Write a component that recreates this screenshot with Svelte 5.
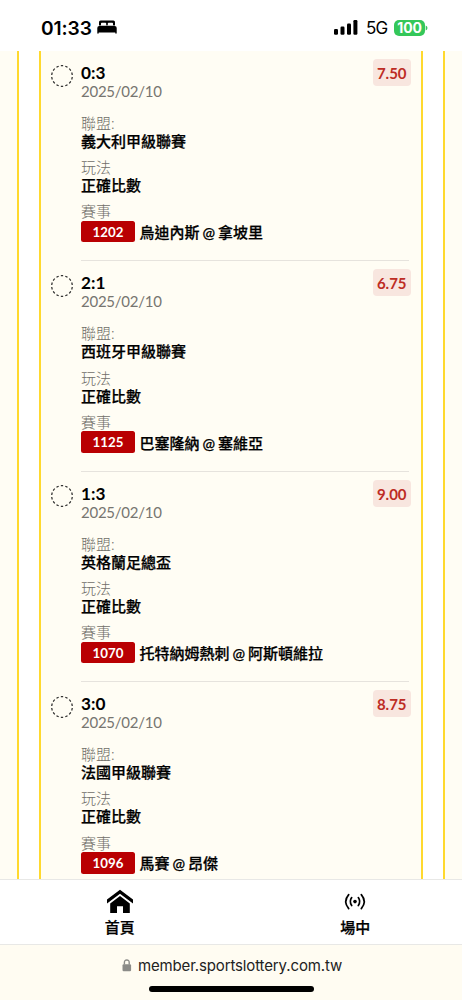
<script>
  const bets = [
    { score: '0:3', league: '義大利甲級聯賽', code: '1202', away: '烏迪內斯', home: '拿坡里', odds: '7.50' },
    { score: '2:1', league: '西班牙甲級聯賽', code: '1125', away: '巴塞隆納', home: '塞維亞', odds: '6.75' },
    { score: '1:3', league: '英格蘭足總盃', code: '1070', away: '托特納姆熱刺', home: '阿斯頓維拉', odds: '9.00' },
    { score: '3:0', league: '法國甲級聯賽', code: '1096', away: '馬賽', home: '昂傑', odds: '8.75' }
  ];
</script>

<div class="screen">
  <header class="status">
    <div class="clock">
      <span>01:33</span>
      <svg width="20" height="15" viewBox="0 0 20 15">
        <path d="M2 5.6V2.2Q2 .6 3.6 .6H16.4Q18 .6 18 2.2V5.6Z" />
        <path d="M4 5.4V3.6Q4 2.8 4.8 2.8H8.4Q9.2 2.8 9.2 3.6V5.4ZM10.8 5.4V3.6Q10.8 2.8 11.6 2.8H15.2Q16 2.8 16 3.6V5.4Z" fill="#fff" />
        <path d="M2.3 5.9H17.7Q19.7 5.9 19.7 8.1V13.1Q19.7 13.8 19 13.8T18.3 13.1V12.4H1.7V13.1Q1.7 13.8 1 13.8T.3 13.1V8.1Q.3 5.9 2.3 5.9Z" />
      </svg>
    </div>
    <div class="signals">
      <svg width="24" height="15" viewBox="0 0 24 15">
        <rect x="0" y="9" width="4" height="5.8" rx="1.2" />
        <rect x="6.5" y="6.6" width="4" height="8.2" rx="1.2" />
        <rect x="13" y="3.6" width="4" height="11.2" rx="1.2" />
        <rect x="19.4" y="0" width="4" height="14.8" rx="1.2" />
      </svg>
      <span class="network">5G</span>
      <span class="battery">100</span>
      <svg class="cap" width="3" height="6" viewBox="0 0 3 6"><path d="M.7.5Q2.5 1.4 2.5 3T.7 5.5Z" /></svg>
    </div>
  </header>

  <main>
    <div class="edge left"></div>
    <ul class="slip">
      {#each bets as bet}
        <li>
          <svg class="radio" width="24" height="24" viewBox="0 0 24 24">
            <circle cx="12" cy="12" r="10.3" pathLength="112" transform="rotate(-90 12 12)" />
          </svg>
          <div class="body">
            <div class="top">
              <div>
                <div class="score">{bet.score}</div>
                <div class="date">2025/02/10</div>
              </div>
              <span class="odds">{bet.odds}</span>
            </div>
            <dl>
              <dt>聯盟:</dt>
              <dd>{bet.league}</dd>
              <dt>玩法</dt>
              <dd>正確比數</dd>
              <dt>賽事</dt>
              <dd class="match"><span class="code">{bet.code}</span><span class="teams">{bet.away} @ {bet.home}</span></dd>
            </dl>
          </div>
        </li>
      {/each}
    </ul>
    <div class="edge right"></div>
  </main>

  <nav>
    <a href="#home">
      <svg width="28" height="26" viewBox="0 0 28 26">
        <path d="M14 .8L27 10.6V14.6L14 4.7L1 14.6V10.6Z" />
        <path d="M14 7L23.8 14.4V24H17V17.3H11V24H4.2V14.4Z" />
      </svg>
      <span>首頁</span>
    </a>
    <a href="#live">
      <svg class="live" width="28" height="26" viewBox="0 0 28 26">
        <circle cx="14" cy="12.6" r="1.8" />
        <path d="M10.7 8.6Q7.9 12.6 10.7 16.6M17.3 8.6Q20.1 12.6 17.3 16.6M7.7 5.6Q1.8 12.6 7.7 19.6M20.3 5.6Q26.2 12.6 20.3 19.6" />
      </svg>
      <span>場中</span>
    </a>
  </nav>

  <footer>
    <div class="address">
      <svg width="10" height="13" viewBox="0 0 10 13">
        <rect x=".5" y="5.3" width="8.6" height="7" rx="1.2" />
        <path d="M2.4 5.5V3.5Q2.4 1 4.8 1T7.2 3.5V5.5" />
      </svg>
      <span>member.sportslottery.com.tw</span>
    </div>
    <div class="indicator"></div>
  </footer>
</div>

<style>
  :global(body) {
    margin: 0;
    background: #fff;
  }
  .screen {
    width: 462px;
    height: 1000px;
    display: flex;
    flex-direction: column;
    overflow: hidden;
    color: #000;
    font-family: Lato, "Noto Sans CJK TC", sans-serif;
  }
  .status {
    flex: none;
    height: 51px;
    box-sizing: border-box;
    padding: 17px 34px 0 41px;
    display: flex;
    justify-content: space-between;
    font-family: Inter, sans-serif;
  }
  .clock, .signals {
    display: flex;
    align-items: center;
    height: 21px;
  }
  .clock {
    gap: 5.5px;
    font-size: 19.2px;
    font-weight: 600;
    letter-spacing: -0.1px;
  }
  .network {
    margin-left: 8px;
    font-size: 17px;
    letter-spacing: -0.8px;
    width: 22px;
  }
  .battery {
    margin-left: 6px;
    width: 31px;
    height: 16px;
    border-radius: 5px;
    background: #34c759;
    color: #fff;
    font-size: 14px;
    font-weight: 700;
    line-height: 16px;
    letter-spacing: -0.2px;
    text-align: center;
  }
  .cap {
    fill: #34c759;
  }
  main {
    flex: none;
    height: 828px;
    display: flex;
    justify-content: space-between;
    overflow: hidden;
  }
  .edge {
    box-sizing: border-box;
    width: 19.3px;
    background: #fffdf4;
  }
  .left {
    border-right: 2px solid #ffd92e;
  }
  .right {
    border-left: 2px solid #ffd92e;
  }
  .slip {
    box-sizing: border-box;
    width: 384px;
    height: 842px;
    margin: 0;
    padding: 0 12px 0 10px;
    list-style: none;
    background: #fffdf4;
    border: solid #ffd92e;
    border-width: 0 2px;
  }
  li {
    display: flex;
    height: 210.4px;
  }
  .radio {
    flex: none;
    margin: 12.7px 7.5px 0 -1.5px;
  }
  .radio circle {
    fill: none;
    stroke: #222;
    stroke-width: 1.2;
    stroke-dasharray: 4.2 3.8;
    stroke-dashoffset: 2.1;
  }
  .body {
    flex: 1;
    box-sizing: border-box;
    height: 210.4px;
    border-bottom: 1.4px solid #e6e3dd;
  }
  .top {
    display: flex;
    justify-content: space-between;
    height: 63px;
    padding-top: 8px;
    box-sizing: border-box;
    margin-right: -2px;
  }
  .score {
    margin-top: 4px;
    font-size: 17.2px;
    font-weight: 700;
    line-height: 19px;
  }
  .date {
    color: #777570;
    font-size: 15px;
    line-height: 18px;
    letter-spacing: -0.25px;
  }
  .odds {
    width: 38.5px;
    height: 27px;
    border-radius: 4px;
    background: #f8e6df;
    color: #bd2c24;
    font-size: 15px;
    font-weight: 700;
    line-height: 29px;
    text-align: center;
  }
  dl, dd {
    margin: 0;
  }
  dt, dd {
    font-size: 15px;
    line-height: 18px;
  }
  dt {
    color: #6f6d68;
    font-weight: 300;
  }
  dd {
    font-weight: 500;
    -webkit-text-stroke: 0.25px #000;
    margin-bottom: 8.2px;
  }
  .match {
    display: flex;
    align-items: center;
    gap: 4.5px;
    height: 21.5px;
    margin-top: 0.6px;
    white-space: nowrap;
  }
  .teams {
    padding-top: 1px;
    word-spacing: -0.8px;
  }
  .code {
    width: 54px;
    height: 21.5px;
    border-radius: 2.5px;
    background: #b90002;
    color: #fff;
    font-size: 13.3px;
    font-weight: 700;
    -webkit-text-stroke: 0;
    line-height: 22px;
    text-align: center;
  }
  nav {
    flex: none;
    height: 66px;
    box-sizing: border-box;
    border: solid #e8e8e6;
    border-width: 1px 0;
    padding: 0 2px 0 2px;
    display: flex;
    background: #fff;
  }
  nav a {
    width: 235.5px;
    flex: none;
    display: flex;
    flex-direction: column;
    align-items: center;
    padding-top: 9px;
    color: #000;
    text-decoration: none;
    font-size: 15px;
    font-weight: 500;
    -webkit-text-stroke: 0.25px #000;
    line-height: 25px;
  }
  .live circle {
    fill: #000;
  }
  .live path {
    fill: none;
    stroke: #000;
    stroke-width: 1.7;
    stroke-linecap: round;
  }
  footer {
    flex: 1;
    background: #fffcf2;
    display: flex;
    flex-direction: column;
    align-items: center;
    font-family: Inter, sans-serif;
  }
  .address {
    display: flex;
    align-items: center;
    gap: 6px;
    height: 20px;
    margin: 10px 0 0 2px;
    font-size: 15px;
    letter-spacing: -0.13px;
    color: #222;
  }
  .address svg {
    fill: #8b8b88;
  }
  .address path {
    fill: none;
    stroke: #8b8b88;
    stroke-width: 1.4;
  }
  .indicator {
    margin-top: 11px;
    width: 165px;
    height: 6px;
    border-radius: 3px;
    background: #000;
  }
</style>
